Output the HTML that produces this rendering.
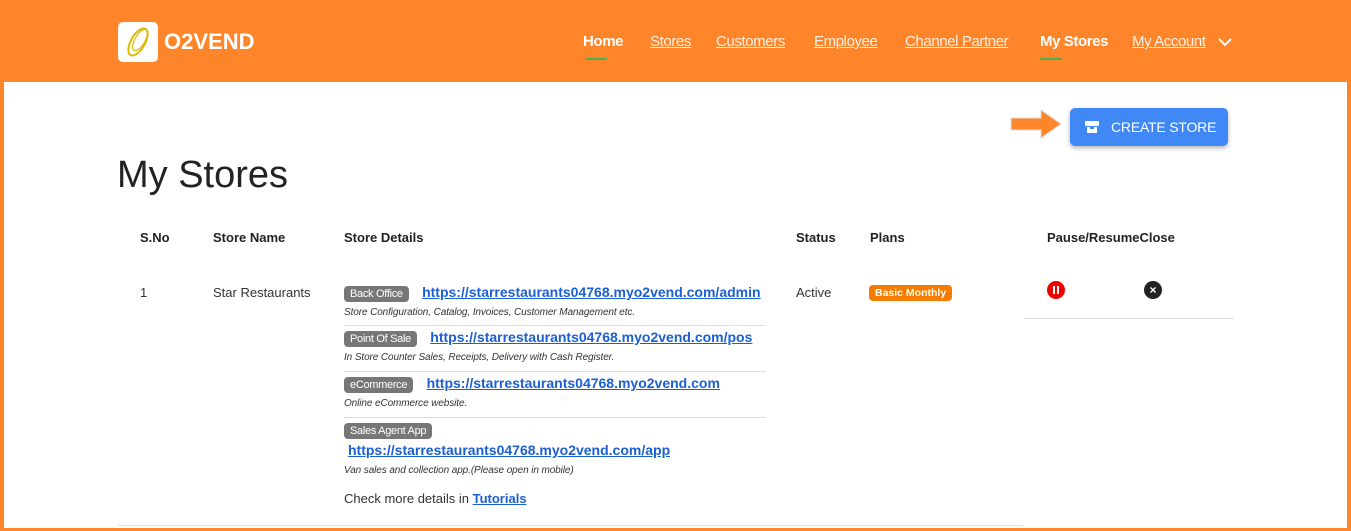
<!DOCTYPE html>
<html><head><meta charset="utf-8"><style>
*{margin:0;padding:0;box-sizing:border-box}
body{width:1351px;height:531px;background:#FF852A;font-family:"Liberation Sans","DejaVu Sans",sans-serif;position:relative;overflow:hidden;color:#222}
.a{position:absolute;white-space:nowrap}
.main{position:absolute;left:4px;top:82px;width:1343px;height:446px;background:#fff}
.nav{font-size:15px;color:#fff;top:33px;letter-spacing:-0.4px}
.nav.b{font-weight:bold}
.nav.u{text-decoration:underline;color:#fdf0e4}
.bar{position:absolute;height:2px;width:22px;background:#4caf50;top:58px}
.th{font-weight:bold;font-size:13px;top:230px}
.td{font-size:13px;top:285px;color:#333}
.badge{display:inline-block;background:#777;color:#fff;font-size:11px;border-radius:4px;padding:2px 6px;letter-spacing:-0.3px}
.lnk{color:#1a5fd6;font-weight:bold;text-decoration:underline;font-size:14px}
.desc{font-style:italic;font-size:10px;color:#333;letter-spacing:-0.1px}
.hr{position:absolute;height:1px;background:#ddd}
</style></head><body>
<div class="main"></div>
<div class="a" style="left:118px;top:22px;width:40px;height:40px;background:#fff;border-radius:5px">
<svg width="40" height="40" viewBox="0 0 40 40"><ellipse cx="20" cy="20" rx="7" ry="15" transform="rotate(30 20 20)" fill="none" stroke="#e0b800" stroke-width="2"/><ellipse cx="22" cy="18" rx="5" ry="12" transform="rotate(30 22 18)" fill="none" stroke="#e0b800" stroke-width="1.2"/></svg></div>
<div class="a" style="left:164px;top:29px;font-size:22px;font-weight:bold;color:#fff">O2VEND</div>
<div class="a nav b" style="left:583px">Home</div><div class="bar" style="left:585px"></div>
<div class="a nav u" style="left:650px">Stores</div>
<div class="a nav u" style="left:716px">Customers</div>
<div class="a nav u" style="left:814px">Employee</div>
<div class="a nav u" style="left:905px">Channel Partner</div>
<div class="a nav b" style="left:1040px">My Stores</div><div class="bar" style="left:1040px"></div>
<div class="a nav u" style="left:1132px">My Account</div>
<svg class="a" style="left:1218px;top:37px" width="14" height="10" viewBox="0 0 14 10"><path d="M1 2l6 6 6-6" fill="none" stroke="#fff" stroke-width="2"/></svg>
<svg class="a" style="left:1008px;top:108px" width="56" height="32" viewBox="0 0 56 32"><path d="M3 10h30v-8l20 14-20 14v-8H3z" fill="#FF852A" stroke="#ddd" stroke-width="1"/></svg>
<div class="a" style="left:1070px;top:108px;width:158px;height:38px;background:#3f88f5;border-radius:5px;box-shadow:0 2px 5px rgba(0,0,0,.3);color:#fff;font-size:14px;line-height:39px;padding-left:41px;letter-spacing:-0.2px">CREATE STORE</div>
<svg class="a" style="left:1084px;top:119px" width="16" height="16" viewBox="0 0 16 16"><rect x="1" y="2" width="14" height="5" rx="1" fill="#fff"/><rect x="3" y="8" width="10" height="6" fill="#fff"/><rect x="6" y="8" width="4" height="2" fill="#3f88f5"/></svg>
<div class="a" style="left:117px;top:154px;font-size:38px;color:#222">My Stores</div>
<div class="a th" style="left:140px">S.No</div>
<div class="a th" style="left:213px">Store Name</div>
<div class="a th" style="left:344px">Store Details</div>
<div class="a th" style="left:796px">Status</div>
<div class="a th" style="left:870px">Plans</div>
<div class="a th" style="left:1047px">Pause/ResumeClose</div>
<div class="a td" style="left:140px">1</div>
<div class="a td" style="left:213px">Star Restaurants</div>
<div class="a td" style="left:796px">Active</div>
<div class="a" style="left:869px;top:285px;background:#f57c00;color:#fff;font-weight:bold;font-size:10.5px;padding:2px 6px;border-radius:4px">Basic Monthly</div>
<div class="a" style="left:1047px;top:281px;width:18px;height:18px;border-radius:50%;background:#e00"><div style="position:absolute;left:6px;top:5px;width:2px;height:8px;background:#fff"></div><div style="position:absolute;left:10px;top:5px;width:2px;height:8px;background:#fff"></div></div>
<div class="a" style="left:1144px;top:281px;width:18px;height:18px;border-radius:50%;background:#222;color:#fff;font-size:12px;font-weight:bold;text-align:center;line-height:18px">×</div>
<div class="hr" style="left:1024px;top:318px;width:210px"></div>
<div class="a" style="left:344px;top:284px"><span class="badge">Back Office</span>&nbsp;&nbsp; <span class="lnk">https://starrestaurants04768.myo2vend.com/admin</span></div>
<div class="a desc" style="left:344px;top:307px">Store Configuration, Catalog, Invoices, Customer Management etc.</div>
<div class="hr" style="left:344px;top:325px;width:422px"></div>
<div class="a" style="left:344px;top:329px"><span class="badge">Point Of Sale</span>&nbsp;&nbsp; <span class="lnk">https://starrestaurants04768.myo2vend.com/pos</span></div>
<div class="a desc" style="left:344px;top:352px">In Store Counter Sales, Receipts, Delivery with Cash Register.</div>
<div class="hr" style="left:344px;top:371px;width:422px"></div>
<div class="a" style="left:344px;top:375px"><span class="badge">eCommerce</span>&nbsp;&nbsp; <span class="lnk">https://starrestaurants04768.myo2vend.com</span></div>
<div class="a desc" style="left:344px;top:398px">Online eCommerce website.</div>
<div class="hr" style="left:344px;top:417px;width:422px"></div>
<div class="a" style="left:344px;top:421px"><span class="badge">Sales Agent App</span></div>
<div class="a lnk" style="left:348px;top:442px">https://starrestaurants04768.myo2vend.com/app</div>
<div class="a desc" style="left:344px;top:465px">Van sales and collection app.(Please open in mobile)</div>
<div class="a" style="left:344px;top:491px;font-size:13px;color:#333">Check more details in <span class="lnk" style="font-size:13px">Tutorials</span></div>
<div class="hr" style="left:118px;top:525px;width:905px"></div>
</body></html>
